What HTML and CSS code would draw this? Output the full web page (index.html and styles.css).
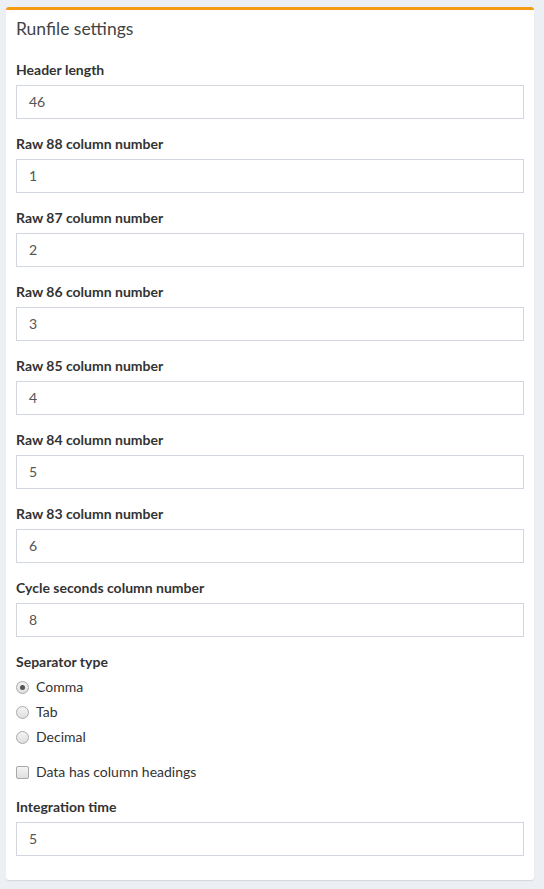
FILE: index.html
```html
<!DOCTYPE html>
<html>
<head>
<meta charset="utf-8">
<link rel="stylesheet" href="styles.css">
</head>
<body>
<div class="box">
  <div class="box-header"><h3 class="box-title">Runfile settings</h3></div>
  <div class="box-body">
    <div class="form-group"><label class="control-label">Header length</label><div class="form-control">46</div></div>
    <div class="form-group"><label class="control-label">Raw 88 column number</label><div class="form-control">1</div></div>
    <div class="form-group"><label class="control-label">Raw 87 column number</label><div class="form-control">2</div></div>
    <div class="form-group"><label class="control-label">Raw 86 column number</label><div class="form-control">3</div></div>
    <div class="form-group"><label class="control-label">Raw 85 column number</label><div class="form-control">4</div></div>
    <div class="form-group"><label class="control-label">Raw 84 column number</label><div class="form-control">5</div></div>
    <div class="form-group"><label class="control-label">Raw 83 column number</label><div class="form-control">6</div></div>
    <div class="form-group"><label class="control-label">Cycle seconds column number</label><div class="form-control">8</div></div>
    <div class="form-group radio-group">
      <label class="control-label">Separator type</label>
      <div class="options">
        <div class="option"><span class="radio checked"></span><span>Comma</span></div>
        <div class="option"><span class="radio"></span><span>Tab</span></div>
        <div class="option"><span class="radio"></span><span>Decimal</span></div>
      </div>
    </div>
    <div class="form-group check-group">
      <div class="option"><span class="checkbox"></span><span>Data has column headings</span></div>
    </div>
    <div class="form-group last"><label class="control-label">Integration time</label><div class="form-control">5</div></div>
  </div>
</div>
</body>
</html>
```

FILE: styles.css
```css
html, body {
  margin: 0;
  padding: 0;
}
body {
  background: #ecf0f5;
  font-family: "Source Sans Pro", Lato, "Liberation Sans", sans-serif;
  font-size: 14px;
  color: #333;
  padding: 7px 10px 8px 6px;
}
.box {
  background: #fff;
  border-top: 3px solid #f39c12;
  border-radius: 3px;
  box-shadow: 0 1px 1px rgba(0,0,0,0.1);
}
.box-header {
  padding: 9px 10px 11px;
}
.box-title {
  margin: 0;
  font-size: 17.5px;
  line-height: 20px;
  font-weight: 400;
  color: #444;
}
.box-body {
  padding: 10px 10px 24px;
  display: flex;
  flex-direction: column;
  gap: 15px;
}
.form-group {
  display: flex;
  flex-direction: column;
}
.control-label {
  font-weight: 700;
  line-height: 20px;
  margin-bottom: 5px;
  color: #333;
}
.form-control {
  height: 34px;
  box-sizing: border-box;
  border: 1px solid #d2d6de;
  padding: 6px 12px;
  line-height: 20px;
  color: #555;
}
.options {
  display: flex;
  flex-direction: column;
  gap: 5px;
}
.option {
  display: flex;
  align-items: center;
  height: 20px;
  line-height: 20px;
  color: #333;
}
.option span:last-child {
  margin-left: 7px;
}
.radio, .checkbox {
  width: 11px;
  height: 11px;
  border: 1px solid #a9a9a9;
  background: linear-gradient(#f4f4f4, #dedede);
  flex: none;
  position: relative;
}
.radio {
  border-radius: 50%;
}
.checkbox {
  border-radius: 2px;
}
.radio.checked::after {
  content: "";
  position: absolute;
  left: 3px;
  top: 3px;
  width: 5px;
  height: 5px;
  border-radius: 50%;
  background: #555;
}
```
